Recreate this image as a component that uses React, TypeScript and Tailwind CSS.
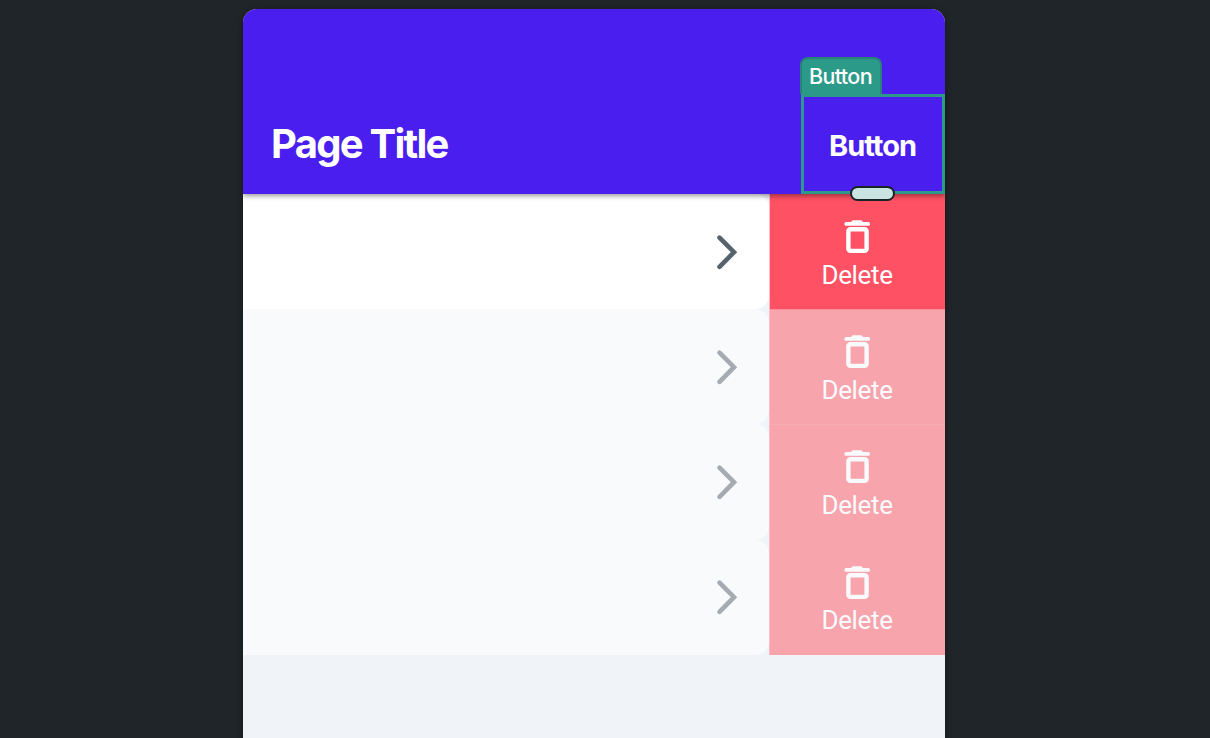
const rows = [
  { id: 1, active: true, height: "h-[115px]", edge: "border-t-0 pt-[26px]", chevron: "", label: "mt-[6px]" },
  { id: 2, active: false, height: "h-[115px]", edge: "border-t border-[#f88e99] pt-[25px]", chevron: "", label: "mt-[6px]" },
  { id: 3, active: false, height: "h-[116px]", edge: "border-t border-[#f7adb5] pt-[25px]", chevron: "", label: "mt-[6px]" },
  { id: 4, active: false, height: "h-[115px]", edge: "border-t-0 pt-[26px]", chevron: "pb-[2px]", label: "mt-[5px]" },
];

function Trash() {
  return (
    <svg width="28" height="34" viewBox="0 0 28 34" fill="none" className="block">
      <path
        d="M3.2 2.1H8L9.3 0.6Q9.7 0.2 10.3 0.2H17.7Q18.3 0.2 18.7 0.6L20 2.1H25.2A1.85 1.85 0 0 1 25.2 5.8H3.2A1.85 1.85 0 0 1 3.2 2.1Z"
        fill="currentColor"
      />
      <rect x="5.4" y="9.2" width="18.2" height="21.7" rx="2" stroke="currentColor" strokeWidth="4.4" />
    </svg>
  );
}

function Chevron() {
  return (
    <svg width="24" height="38" viewBox="0 0 24 38" fill="none" className="block">
      <path
        d="M4.5 4.6L19 19.2L4.5 33.8"
        stroke="currentColor"
        strokeWidth="4.6"
        strokeLinecap="round"
        strokeLinejoin="miter"
      />
    </svg>
  );
}

function Row({ active, height, edge, chevron, label }: Omit<(typeof rows)[number], "id">) {
  return (
    <div className={`flex ${height}`}>
      <div
        className={`flex w-[526px] items-center justify-end rounded-r-[14px] pr-[30px] ${chevron} ${
          active ? "bg-white text-[#57636c]" : "bg-[#f9fafc] text-[#a5abb2]"
        }`}
      >
        <Chevron />
      </div>
      <div
        className={`flex flex-1 border-l border-l-[#f9bcc6] ${
          active ? "bg-[#ff5164] text-white" : "bg-[#f7a4ad] text-[#f9fafc]"
        }`}
      >
        <div className={`flex flex-1 flex-col items-center pr-px ${edge}`}>
          <Trash />
          <span className={`font-['Roboto',sans-serif] text-[26px] leading-[30px] tracking-[-0.35px] ${label}`}>
            Delete
          </span>
        </div>
      </div>
    </div>
  );
}

export default function App() {
  return (
    <div className="flex h-[738px] w-[1210px] justify-center overflow-hidden bg-[#202529] pt-[9px] pr-[22px]">
      <main className="flex h-[760px] w-[702px] shrink-0 flex-col overflow-clip rounded-t-[14px] bg-[#f0f3f8] shadow-[0_2px_6px_rgba(0,0,0,0.4)]">
        <header className="relative z-10 flex h-[185px] shrink-0 items-end justify-between bg-[#491eee] text-white shadow-[0_2px_5px_rgba(0,0,0,0.4)]">
          <h1 className="mb-[26px] pl-[28px] font-['Inter',sans-serif] text-[40px] leading-[48px] font-[650] tracking-[-1.75px]">
            Page Title
          </h1>
          <div className="relative flex h-[100px] w-[144px] items-center justify-center border-[3px] border-[#2c9a89] pt-[4px] pr-px">
            <div className="absolute -top-[40px] -left-[4px] flex h-[37px] w-[82px] items-center justify-center rounded-t-[8px] border-2 border-b-0 border-[#298379] bg-[#2c9a89] pr-px pb-px font-['Inter',sans-serif] text-[21.5px] leading-[26px] font-[450] tracking-[-0.6px]">
              Button
            </div>
            <span className="font-['Inter',sans-serif] text-[29px] leading-[36px] font-[650] tracking-[-1px]">
              Button
            </span>
            <div className="absolute -bottom-[10px] left-[46px] h-[15px] w-[45px] rounded-full border-2 border-[#182326] bg-[#cae5e1]" />
          </div>
        </header>
        {rows.map(({ id, ...row }) => (
          <Row key={id} {...row} />
        ))}
      </main>
    </div>
  );
}
